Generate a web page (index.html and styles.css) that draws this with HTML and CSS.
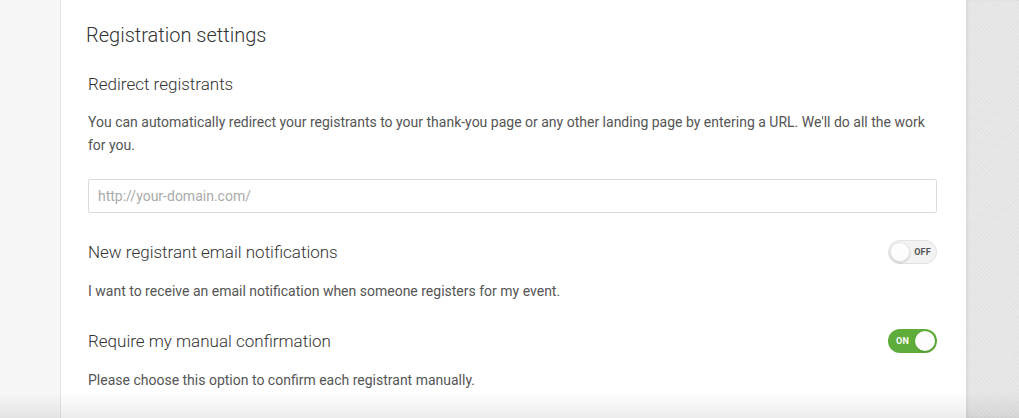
FILE: index.html
```html
<!DOCTYPE html>
<html>
<head>
<meta charset="utf-8">
<link rel="stylesheet" href="styles.css">
</head>
<body>
<div class="page">
  <div class="side-left"></div>
  <main class="card">
    <h1 class="title">Registration settings</h1>
    <h2 class="section-title">Redirect registrants</h2>
    <p class="desc intro">You can automatically redirect your registrants to your thank-you page or any other landing page by entering a URL. We'll do all the work for you.</p>
    <input class="url-input" type="text" placeholder="http://your-domain.com/">
    <div class="option-row first">
      <h3 class="option-title">New registrant email notifications</h3>
      <span class="toggle off"><span class="knob"></span><span class="toggle-label">OFF</span></span>
    </div>
    <p class="desc option-desc">I want to receive an email notification when someone registers for my event.</p>
    <div class="option-row">
      <h3 class="option-title">Require my manual confirmation</h3>
      <span class="toggle on"><span class="toggle-label">ON</span><span class="knob"></span></span>
    </div>
    <p class="desc option-desc">Please choose this option to confirm each registrant manually.</p>
  </main>
  <div class="side-right"></div>
</div>
<div class="bottom-fade"></div>
</body>
</html>
```
FILE: styles.css
```css
html, body {
  margin: 0;
  padding: 0;
  height: 100%;
  overflow: hidden;
}
body {
  font-family: Roboto, "Liberation Sans", sans-serif;
  background: #f7f7f7;
}
.page {
  display: flex;
  height: 418px;
}
.side-left {
  width: 60px;
  background: #f7f7f7;
  border-right: 1px solid #e6e6e6;
  flex: none;
}
.card {
  width: 849px;
  flex: none;
  background: #fff;
  padding: 0 29px 0 27px;
}
.side-right {
  flex: 1;
  background-color: #e6e6e6;
  background-image:
    repeating-linear-gradient(45deg, rgba(255,255,255,0.12) 0 1px, transparent 1px 3px),
    repeating-linear-gradient(-45deg, rgba(0,0,0,0.015) 0 1px, transparent 1px 3px);
  box-shadow: inset 2px 0 3px rgba(0,0,0,0.05);
}
.title {
  margin: 20px 0 0 -2px;
  font-weight: 300;
  font-size: 20px;
  line-height: 30px;
  color: #333;
}
.section-title {
  margin: 22px 0 0 0;
  font-weight: 300;
  font-size: 17px;
  line-height: 24px;
  color: #333;
}
.desc {
  margin: 14.5px 0 0 0;
  font-size: 14px;
  line-height: 23px;
  color: #555;
}
.url-input {
  display: block;
  box-sizing: border-box;
  width: 849px;
  height: 34px;
  margin: 22.5px 0 0 0;
  padding: 0 9px;
  border: 1px solid #dcdcdc;
  border-radius: 2px;
  font-family: Roboto, "Liberation Sans", sans-serif;
  font-size: 14px;
  color: #555;
  outline: none;
}
.url-input::placeholder {
  color: #aaa;
}
.option-row {
  display: flex;
  align-items: center;
  justify-content: space-between;
  height: 24px;
  margin: 26.5px 0 0 0;
}
.option-row.first {
  margin-top: 27px;
}
.option-title {
  margin: 0;
  font-weight: 300;
  font-size: 17px;
  line-height: 24px;
  color: #333;
}
.option-desc {
  margin: 15.5px 0 0 0;
}
.toggle {
  box-sizing: border-box;
  width: 49px;
  height: 24px;
  border-radius: 12px;
  display: flex;
  align-items: center;
  padding: 0 2px;
}
.toggle .knob {
  width: 20px;
  height: 20px;
  border-radius: 50%;
  background: #fdfdfd;
  flex: none;
}
.toggle-label {
  font-family: Roboto, "Liberation Sans", sans-serif;
  font-weight: 700;
  font-size: 9px;
  letter-spacing: 0.2px;
  flex: 1;
  text-align: center;
}
.toggle.off {
  background: #f3f3f3;
  border: 1px solid #e2e2e2;
  padding: 0 1px;
}
.toggle.off .knob {
  box-shadow: 0 1px 2px rgba(0,0,0,0.18);
  border: 1px solid #e6e6e6;
  box-sizing: border-box;
}
.toggle.off .toggle-label {
  color: #555;
}
.toggle.on {
  background: #5eac3a;
}
.toggle.on .toggle-label {
  color: #fff;
}
.toggle.on .knob {
  box-shadow: 0 1px 2px rgba(0,0,0,0.15);
}
.bottom-fade {
  position: fixed;
  left: 0;
  right: 0;
  bottom: 0;
  height: 26px;
  background: linear-gradient(to bottom, rgba(0,0,0,0), rgba(0,0,0,0.07));
  pointer-events: none;
}
```
